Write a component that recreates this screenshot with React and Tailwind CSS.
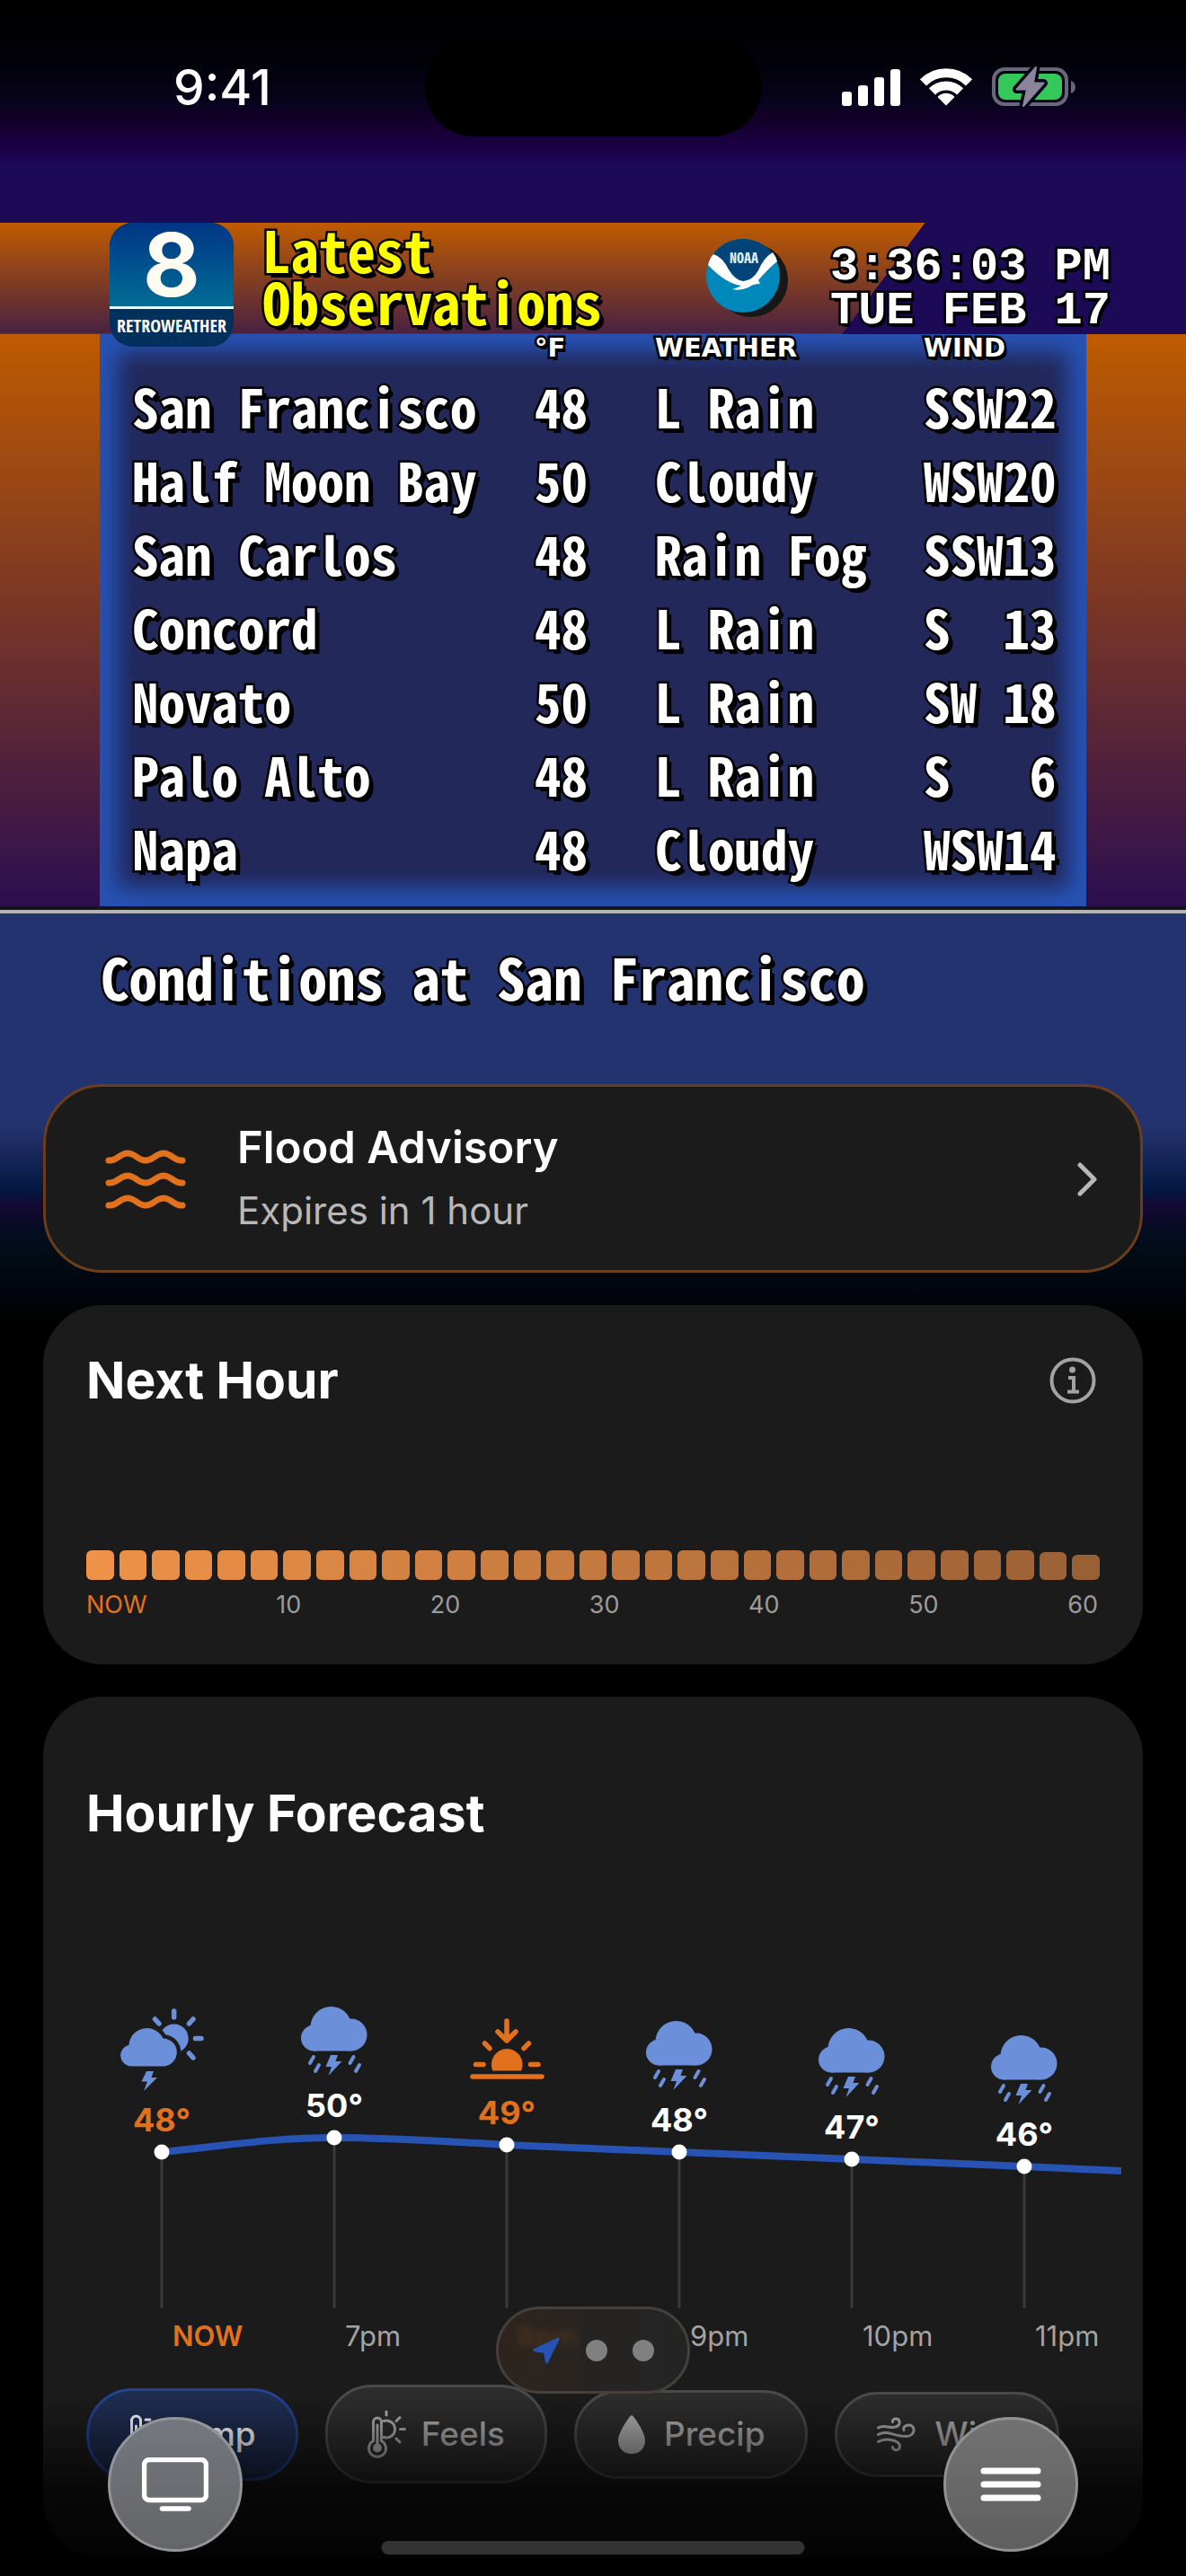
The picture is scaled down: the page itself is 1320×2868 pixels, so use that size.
import { useState } from 'react'
import clsx from 'clsx'

const OBSERVATIONS = [
  { city: 'San Francisco', temp: 48, weather: 'L Rain', wind: 'SSW22' },
  { city: 'Half Moon Bay', temp: 50, weather: 'Cloudy', wind: 'WSW20' },
  { city: 'San Carlos', temp: 48, weather: 'Rain Fog', wind: 'SSW13' },
  { city: 'Concord', temp: 48, weather: 'L Rain', wind: 'S  13' },
  { city: 'Novato', temp: 50, weather: 'L Rain', wind: 'SW 18' },
  { city: 'Palo Alto', temp: 48, weather: 'L Rain', wind: 'S   6' },
  { city: 'Napa', temp: 48, weather: 'Cloudy', wind: 'WSW14' },
]

const MINUTE_LABELS = ['NOW', '10', '20', '30', '40', '50', '60']

// bar heights for the next hour, one bar every two minutes
const BARS = Array.from({ length: 31 }, (_, i) => (i === 30 ? 28 : i === 29 ? 31 : 33))

// y is the height of the point inside the chart
const HOURS = [
  { label: 'NOW', temp: 48, y: 196, icon: 'sunStorm', accent: true },
  { label: '7pm', temp: 50, y: 180, icon: 'storm' },
  { label: '8pm', temp: 49, y: 188, icon: 'sunset', accent: true },
  { label: '9pm', temp: 48, y: 196, icon: 'storm' },
  { label: '10pm', temp: 47, y: 204, icon: 'storm' },
  { label: '11pm', temp: 46, y: 212, icon: 'storm' },
]

const RETRO = "font-['Noto_Sans_Mono_CJK_JP',monospace] font-bold [paint-order:stroke_fill] [-webkit-text-stroke:5px_black] [text-shadow:5px_5px_0_black]"
const RETRO_WIDE = 'font-bold [paint-order:stroke_fill] [-webkit-text-stroke:5px_black] [text-shadow:3px_4px_0_black]'

function barColor(i) {
  const t = i / 30
  const mix = (a, b) => Math.round(a + (b - a) * t)
  return `rgb(${mix(238, 154)}, ${mix(146, 96)}, ${mix(72, 53)})`
}

/* Icons */

function SignalIcon() {
  return (
    <svg width="65" height="41" viewBox="0 0 65 41" fill="white" aria-hidden="true">
      <rect x="0" y="25" width="11" height="16" rx="3" />
      <rect x="18" y="18" width="11" height="23" rx="3" />
      <rect x="36" y="9" width="11" height="32" rx="3" />
      <rect x="54" y="0" width="11" height="41" rx="3" />
    </svg>
  )
}

function WifiIcon() {
  return (
    <svg width="58" height="42" viewBox="0 0 58 42" fill="none" stroke="white" strokeWidth="10" aria-hidden="true">
      <path d="M3.5 15.9A36 36 0 0 1 54.5 15.9" />
      <path d="M13.4 25.9A22 22 0 0 1 44.6 25.9" />
      <path d="M29 40.5L20.5 32A12 12 0 0 1 37.5 32Z" fill="white" stroke="white" strokeWidth="1.5" strokeLinejoin="round" />
    </svg>
  )
}

function BatteryIcon() {
  const bolt = 'M49 0L27.500 24.500H39L35 43L57.500 17.500H46Z'
  return (
    <svg width="94" height="46" viewBox="0 -1 94 46" aria-hidden="true">
      <rect x="2" y="2" width="81" height="39" rx="12" fill="none" stroke="#6b677b" strokeWidth="4" />
      <path d="M88 15C94.500 17 94.500 27 88 29Z" fill="#6b677b" />
      <rect x="7" y="7" width="71" height="29" rx="8" fill="#34c759" />
      <path d={bolt} fill="#060318" stroke="#060318" strokeWidth="9" strokeLinejoin="round" />
      <path d={bolt} fill="#8a8599" stroke="#8a8599" strokeWidth="2" strokeLinejoin="round" />
    </svg>
  )
}

function NoaaLogo() {
  return (
    <svg width="92" height="90" viewBox="0 0 92 90" role="img" aria-label="NOAA">
      <circle cx="50" cy="46" r="41" fill="#171717" />
      <circle cx="41" cy="41" r="41" fill="#0088bb" />
      <path d="M7 18A41 41 0 0 1 75 18Q64 47 43 49Q24 46 7 18Z" fill="#004479" />
      <path d="M8 17Q18 20 25 34Q32 46 41 47Q52 46 58 35Q64 21 74 15Q78 20 79 25Q69 33 58 46L60 50Q52 50 47 54Q38 58 29 56Q36 54 39 52Q22 50 2 29Q4 21 8 17Z" fill="white" />
      <text x="26" y="27" fill="#e6eef5" className="font-['Noto_Sans_Mono_CJK_JP',monospace] text-[16px] font-bold">NOAA</text>
    </svg>
  )
}

function FloodIcon() {
  return (
    <svg width="90" height="66" viewBox="0 0 90 66" fill="none" stroke="#e2711d" strokeWidth="7" strokeLinecap="round" aria-hidden="true">
      <path d="M4 12C13 13 16 4 25 4S36 12 45 12S56 4 65 4S77 13 86 12" />
      <path d="M4 37C13 38 16 29 25 29S36 37 45 37S56 29 65 29S77 38 86 37" />
      <path d="M4 62C13 63 16 54 25 54S36 62 45 62S56 54 65 54S77 63 86 62" />
    </svg>
  )
}

function StormIcon() {
  return (
    <svg width="74" height="78" viewBox="0 0 74 78" fill="#6b8fd8" aria-hidden="true">
      <circle cx="33.500" cy="23" r="23" />
      <circle cx="14.500" cy="35" r="14.500" />
      <circle cx="55.500" cy="31.500" r="18" />
      <rect x="14" y="26" width="42" height="23.500" />
      <g stroke="#6b8fd8" strokeWidth="4" strokeLinecap="round">
        <path d="M14 56L10 63M20 65L16 72M58.500 56L54.500 63M65 65L61 72" />
      </g>
      <path d="M33 54H41L38.500 61H45.500L30.500 77L34 67H27.500Z" />
    </svg>
  )
}

function SunStormIcon() {
  const cloud = 'M12 64.500A12 12 0 0 1 9.500 40.800A20 20 0 0 1 47.500 33.400A15.600 15.600 0 0 1 49 64.500Z'
  return (
    <svg width="93" height="92" viewBox="0 0 93 92" fill="#6b8fd8" aria-hidden="true">
      <circle cx="59.700" cy="33.500" r="16" />
      <path d="M59.700 3V10M83.500 33.500H90M81 12L76.500 17M38.500 12L43 17M76.500 50L81 55" stroke="#6b8fd8" strokeWidth="5.500" strokeLinecap="round" />
      <path d={cloud} stroke="#1b1b1b" strokeWidth="9" />
      <path d={cloud} />
      <path d="M29 70H37L34.500 77H41L26 92L30 81.500H23.500Z" />
    </svg>
  )
}

function SunsetIcon() {
  return (
    <svg width="83" height="73" viewBox="0 0 83 73" fill="none" stroke="#e2711d" strokeWidth="5.500" strokeLinecap="round" strokeLinejoin="round" aria-hidden="true">
      <path d="M41 3V24M31 15L41 25L51 15" />
      <path d="M16.500 28L22 33.500M65.500 28L60 33.500M6.500 51.500H15M67.500 51.500H76M3 65H80" />
      <path d="M25.500 58.500A17.300 17.300 0 1 1 57 58.500Z" fill="#e2711d" stroke="none" />
    </svg>
  )
}

const HOUR_ICONS = { storm: StormIcon, sunStorm: SunStormIcon, sunset: SunsetIcon }

function TempIcon() {
  return (
    <svg width="26" height="47" viewBox="0 0 26 47" fill="none" stroke="currentColor" strokeWidth="3" strokeLinecap="round" aria-hidden="true">
      <path d="M3.500 27V8A5 5 0 0 1 13.500 8V27A9 9 0 1 1 3.500 27Z" />
      <path d="M8.500 14V34M19 7H24M19 14H24M19 21H24" />
    </svg>
  )
}

function FeelsIcon() {
  return (
    <svg width="43" height="54" viewBox="0 0 43 54" fill="none" stroke="currentColor" strokeWidth="3" strokeLinecap="round" aria-hidden="true">
      <path d="M6.500 34.500V13.500A4.500 4.500 0 0 1 15.500 13.500V34.500A9.500 9.500 0 1 1 6.500 34.500Z" />
      <path d="M11 17V42" />
      <circle cx="11" cy="42.500" r="3.500" fill="currentColor" />
      <path d="M18 12.500A9.500 9.500 0 1 1 18 30.500M21 2V6M36 8.500L32 12.500M36.500 21.500H41.500M32 32L36 36" />
    </svg>
  )
}

function PrecipIcon() {
  return (
    <svg width="36" height="43" viewBox="-2 0 36 43" fill="currentColor" aria-hidden="true">
      <path d="M15 0C17 0 30 19 30 28C30 37 23.500 43 15 43S0 37 0 28C0 19 13 0 15 0Z" />
    </svg>
  )
}

function WindIcon() {
  return (
    <svg width="48" height="39" viewBox="0 0 48 39" fill="none" stroke="currentColor" strokeWidth="3" strokeLinecap="round" aria-hidden="true">
      <path d="M1.500 12C8 8 14 13 21 11C27 9 26 2 21 2C18.500 2 17 3.500 17.500 5.500" />
      <path d="M1.500 19.500C12 14 20 22 33 21.500C43 21 43.500 9 35.500 9C31 9 29 12 30 14.500" />
      <path d="M1.500 27.500C9 23 24 25 25.500 32C25.500 38 18 38 17.500 33.500" />
    </svg>
  )
}

const METRICS = [
  { id: 'temp', label: 'Temp', Icon: TempIcon },
  { id: 'feels', label: 'Feels', Icon: FeelsIcon },
  { id: 'precip', label: 'Precip', Icon: PrecipIcon },
  { id: 'wind', label: 'Wind', Icon: WindIcon },
]

/* Sections */

function StatusBar() {
  return (
    <div className="grid grid-cols-[1fr_375px_1fr] items-center pt-[42px] pb-24 bg-[linear-gradient(#000,#010108_67px,#060318_105px,#13002a_135px,#1c0048_165px,#1c0a57_185px)]">
      <time className="pl-[193px] text-[55px] leading-none font-medium">9:41</time>
      <div className="h-[110px] rounded-full bg-black" />
      <div className="flex items-center justify-end gap-[22px] pr-[122px]">
        <SignalIcon />
        <WifiIcon />
        <BatteryIcon />
      </div>
    </div>
  )
}

function RetroHeader() {
  return (
    <header className="relative z-10 flex h-[124px] items-start bg-[#1c0a57] pr-[84px] pl-[122px]">
      <div className="absolute inset-0 border-b border-[#4d3560] bg-linear-to-b/srgb from-[#bf5b00] to-[#492242] [clip-path:polygon(0_0,78%_0,71%_100%,0_100%)]" />
      <div className="relative h-[138px] w-[138px] shrink-0 rounded-[26px] bg-[#00305c] text-center text-[#fffdf2]">
        <div className="rounded-t-[26px] border-b-3 border-[#fffdf2] bg-linear-to-b/srgb from-[#003585] to-[#006d96] text-[98px] leading-[93px] font-bold">8</div>
        <div className="font-['Open_Sans_Condensed','Open_Sans',sans-serif] text-[20px] leading-[38px] font-bold">RETROWEATHER</div>
      </div>
      <h1 className={clsx(RETRO, 'relative ml-8 text-[63px] leading-[58px] text-[#ffff00]')}>
        Latest<br />Observations
      </h1>
      <div className="relative mt-[18px] mr-[46px] ml-auto">
        <NoaaLogo />
      </div>
      <p className={clsx(RETRO_WIDE, "relative pt-[25px] font-['Liberation_Mono',monospace] text-[52px] leading-[49px] whitespace-pre")}>
        3:36:03 PM<br />TUE FEB 17
      </p>
    </header>
  )
}

function Observations() {
  return (
    <section className="bg-linear-to-b/srgb from-[#bf5b00] to-[#2c0e50] px-[111px]">
      <div className="bg-[#22285a] pb-6 shadow-[inset_0_0_24px_20px_#2753b5]">
        <table className="w-full table-fixed text-left">
          <colgroup>
            <col className="w-[484px]" />
            <col className="w-[134px]" />
            <col className="w-[299px]" />
            <col />
          </colgroup>
          <thead>
            <tr className={clsx(RETRO_WIDE, "h-[39px] align-top font-['DejaVu_Sans',sans-serif] text-[29px] leading-[30px]")}>
              <th aria-label="City" />
              <th>°F</th>
              <th>WEATHER</th>
              <th>WIND</th>
            </tr>
          </thead>
          <tbody className={clsx(RETRO, 'text-[59px] leading-[82px]')}>
            {OBSERVATIONS.map((o) => (
              <tr key={o.city} className="whitespace-pre">
                <td className="pl-9">{o.city}</td>
                <td>{o.temp}</td>
                <td>{o.weather}</td>
                <td>{o.wind}</td>
              </tr>
            ))}
          </tbody>
        </table>
      </div>
    </section>
  )
}

function FloodCard() {
  return (
    <button className="flex w-full items-center rounded-[66px] border-3 border-[#6b3d1a] bg-[#1b1b1b] pt-9 pb-[34px] pr-12 pl-[66px] text-left">
      <FloodIcon />
      <span className="ml-[57px] flex grow flex-col gap-1.5 leading-[64px]">
        <span className="text-[49px] font-semibold">Flood Advisory</span>
        <span className="text-[42px] text-[#b8b8b8]">Expires in 1 hour</span>
      </span>
      <svg width="22" height="38" viewBox="0 0 22 38" fill="none" stroke="#b8b8b8" strokeWidth="5" strokeLinecap="round" strokeLinejoin="round" aria-hidden="true">
        <path d="M3 3L19 19L3 35" />
      </svg>
    </button>
  )
}

function NextHour() {
  return (
    <section className="rounded-[66px] bg-[#1b1b1b] px-12 pt-[54px] pb-[50px]">
      <div className="flex items-center justify-between">
        <h2 className="text-[57px] leading-[60px] font-bold">Next Hour</h2>
        <button aria-label="About next hour" className="pr-1">
          <svg width="52" height="52" viewBox="0 0 52 52" fill="none" stroke="#a3a3a3" strokeWidth="4" aria-hidden="true">
            <circle cx="26" cy="26" r="23.500" />
            <circle cx="25.500" cy="14" r="3.500" fill="#a3a3a3" stroke="none" />
            <path d="M21 23H27V38M20 38.500H33" />
          </svg>
        </button>
      </div>
      <div className="mt-[159px] flex items-end gap-1.5">
        {BARS.map((h, i) => (
          <div key={i} className="grow rounded-md" style={{ height: h, backgroundColor: barColor(i) }} />
        ))}
      </div>
      <div className="mt-3 flex justify-between pr-0.5 text-[27px] leading-8 text-[#9b9b9b]">
        {MINUTE_LABELS.map((m) => (
          <span key={m} className={clsx(m === 'NOW' && 'text-[#e2711d]')}>{m}</span>
        ))}
      </div>
    </section>
  )
}

function HourlyForecast() {
  const [metric, setMetric] = useState('temp')

  return (
    <section className="overflow-hidden rounded-[66px] bg-[#1b1b1b] pt-[100px] pb-[83px] pl-12">
      <h2 className="text-[57px] leading-[60px] font-bold">Hourly Forecast</h2>

      <div className="relative mt-[151px] mr-6 -ml-3 overflow-hidden">
        <svg width="1164" height="370" viewBox="0 0 1164 370" className="absolute top-0 left-0" aria-hidden="true">
          {HOURS.map((h, i) => (
            <path key={h.label} d={`M${96 + i * 192} ${h.y}V370`} stroke="#3a3a3a" strokeWidth="3" />
          ))}
          <path d="M96 196C160 190 215 180 288 180S420 185 480 188S610 193 672 196L864 204L1056 212L1164 217" fill="none" stroke="#2753b5" strokeWidth="8" />
          {HOURS.map((h, i) => (
            <circle key={h.label} cx={96 + i * 192} cy={h.y} r="8.500" fill="white" />
          ))}
        </svg>
        <ol className="relative flex">
          {HOURS.map((h) => {
            const Icon = HOUR_ICONS[h.icon]
            return (
              <li key={h.label} className={clsx('w-48 shrink-0', h.accent && 'text-[#e2711d]')}>
                <div className="h-[370px]">
                  <div className="flex flex-col items-center justify-end gap-3" style={{ height: h.y - 16 }}>
                    <Icon />
                    <span className="text-[36px] leading-10 font-bold">{h.temp}°</span>
                  </div>
                </div>
                <div className={clsx('mt-[11px] pl-[108px] text-[31px] leading-10', h.accent ? 'font-semibold' : 'text-[#a3a3a3]')}>{h.label}</div>
              </li>
            )
          })}
        </ol>
      </div>

      <div className="mt-[34px] flex items-center gap-[30px]">
        {METRICS.map(({ id, label, Icon }) => (
          <button
            key={id}
            onClick={() => setMetric(id)}
            aria-pressed={metric === id}
            className={clsx(
              'flex shrink-0 items-center gap-[17px] rounded-[52px] border-3 px-11 py-[25px] text-[37px] leading-[38px] font-medium',
              metric === id ? 'border-[#234391] bg-[#1e2c50] text-white' : 'border-[#4a4a4a] bg-[#2c2c2c] text-[#adadad]'
            )}
          >
            <Icon />
            {label}
          </button>
        ))}
      </div>
    </section>
  )
}

function BottomControls() {
  return (
    <nav className="absolute inset-x-0 bottom-0 h-[300px]">
      <div className="absolute inset-x-0 bottom-0 h-[200px] bg-linear-to-b from-transparent via-black/70 to-black/95" />

      {/* Page indicator */}
      <div className="absolute top-0 left-1/2 flex h-[97px] w-[216px] -translate-x-1/2 items-center justify-center gap-7 rounded-full border-3 border-[#45403c] bg-[linear-gradient(90deg,#33261ddd,#282624dd_50%,#262626e6)] backdrop-blur-[3px]">
        <button aria-label="Current location">
          <svg width="32" height="32" viewBox="-1 -1 32 32" fill="#2753b5" stroke="#2753b5" strokeWidth="3" strokeLinejoin="round" aria-hidden="true">
            <path d="M1.500 14.500L28 2L15.500 28L13.500 16.500Z" />
          </svg>
        </button>
        <button aria-label="Page 2" className="size-6 rounded-full bg-[#808080]" />
        <button aria-label="Page 3" className="size-6 rounded-full bg-[#808080]" />
      </div>

      <div className="absolute inset-x-[120px] bottom-[27px] flex justify-between">
        <button aria-label="TV view" className="grid size-[150px] place-items-center rounded-full border-3 border-[#939598] bg-linear-to-b from-[#74777f] to-[#646567]">
          <svg width="74" height="60" viewBox="0 0 74 60" fill="none" stroke="white" aria-hidden="true">
            <rect x="2.500" y="2.500" width="69" height="45" rx="6" strokeWidth="5.500" />
            <path d="M22.500 57H52" strokeWidth="5.500" strokeLinecap="round" />
          </svg>
        </button>
        <button aria-label="Menu" className="grid size-[150px] place-items-center rounded-full border-3 border-[#929292] bg-linear-to-b from-[#727272] to-[#5f5f5f]">
          <svg width="68" height="38" viewBox="0 0 68 38" stroke="white" strokeWidth="7" strokeLinecap="round" aria-hidden="true">
            <path d="M4 4H64M4 19H64M4 34H64" />
          </svg>
        </button>
      </div>

      <div className="absolute bottom-6 left-1/2 h-[15px] w-[471px] -translate-x-1/2 rounded-full bg-[#333333]" />
    </nav>
  )
}

export default function App() {
  return (
    <div className="relative min-h-screen bg-black font-['Inter',sans-serif] text-white">
      <StatusBar />
      <RetroHeader />
      <Observations />
      <main className="border-t-4 border-[#151515] bg-[linear-gradient(#233370_240px,#1a2a60_265px,#03173f_313px,#140a34_327px,#0f0a2b_343px,#030d20_358px,#020b13_388px,#01050d_425px,#000_460px)]">
        <div className="border-t-4 border-[#b4b4b4] px-12 pt-10 pb-[18px]">
          <h2 className={clsx(RETRO, 'pl-16 text-[63px] leading-[60px]')}>Conditions at San Francisco</h2>
          <div className="mt-[90px] space-y-9">
            <FloodCard />
            <NextHour />
            <HourlyForecast />
          </div>
        </div>
      </main>
      <BottomControls />
    </div>
  )
}
